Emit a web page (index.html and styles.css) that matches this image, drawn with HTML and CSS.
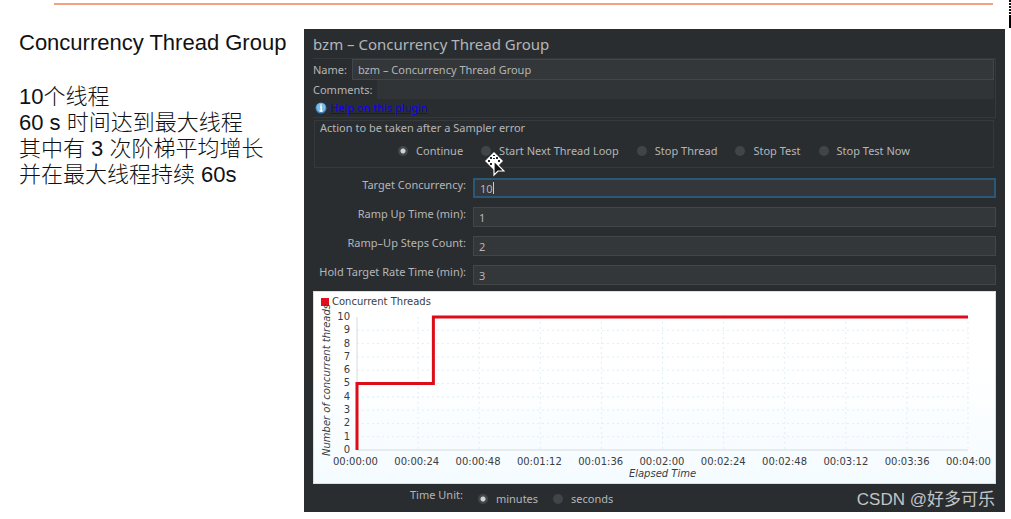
FILE: index.html
```html
<!DOCTYPE html>
<html lang="zh-CN">
<head>
<meta charset="utf-8">
<title>Concurrency Thread Group</title>
<link rel="stylesheet" href="styles.css">
</head>
<body>
<hr class="rule">
<svg class="edge-mark" viewBox="0 0 2 28" aria-hidden="true"><path d="M1 0v14" stroke="#111" stroke-width="2" stroke-dasharray="2 1"/><path d="M1 15v13" stroke="#000" stroke-width="2"/></svg>
<main class="slide">
  <section class="notes">
    <h1>Concurrency Thread Group</h1>
    <p>10个线程<br>60 s 时间达到最大线程<br>其中有 3 次阶梯平均增长<br>并在最大线程持续 60s</p>
  </section>
  <section class="panel">
    <h2>bzm – Concurrency Thread Group</h2>
    <div class="identity">
      <div class="name-row"><label for="name">Name:</label><input class="field" id="name" value="bzm – Concurrency Thread Group"></div>
      <div class="comment-row"><label for="comments">Comments:</label><input id="comments"></div>
      <div class="help">
        <svg viewBox="0 0 12 12" aria-hidden="true"><circle cx="6" cy="6" r="5.5" fill="#3d86bd"/><circle cx="6" cy="5.5" r="4.5" fill="#7dbce8"/><path d="M6 2.3v1.5M5 5h1.2v4M4.6 9h3" stroke="#fff" stroke-width="1.4" fill="none"/></svg>
        <a href="#help">Help on this plugin</a>
      </div>
    </div>
    <fieldset class="action">
      <legend>Action to be taken after a Sampler error</legend>
      <div class="options">
        <label><input type="radio" name="action" checked>Continue</label>
        <label><input type="radio" name="action">Start Next Thread Loop</label>
        <label><input type="radio" name="action">Stop Thread</label>
        <label><input type="radio" name="action">Stop Test</label>
        <label><input type="radio" name="action">Stop Test Now</label>
      </div>
      <svg class="pointer" viewBox="0 0 20 26" aria-hidden="true"><path d="M9 0 18 9 9 18 0 9Z" fill="#fff"/><path d="M9 3v1M6 5v2M12 5v2M3 9h2M13 9h2M6 11v2M9 6v1" stroke="#222" stroke-width="2"/><path d="M9 9v14l4-4h6Z" fill="#111" stroke="#fff" stroke-width="1.2"/></svg>
    </fieldset>
    <div class="settings">
      <label for="target">Target Concurrency:</label><div class="focus-wrap"><input class="field focused" id="target" value="10"><span class="caret"></span></div>
      <label for="ramp">Ramp Up Time (min):</label><input class="field" id="ramp" value="1">
      <label for="steps">Ramp–Up Steps Count:</label><input class="field" id="steps" value="2">
      <label for="hold">Hold Target Rate Time (min):</label><input class="field" id="hold" value="3">
    </div>
    <figure class="chart">
      <figcaption><i></i>Concurrent Threads</figcaption>
      <div class="y-title">Number of concurrent threads</div>
      <div class="y-axis"><span>10</span><span>9</span><span>8</span><span>7</span><span>6</span><span>5</span><span>4</span><span>3</span><span>2</span><span>1</span><span>0</span></div>
      <svg class="plot" viewBox="0 0 240 10" preserveAspectRatio="none" role="img" aria-label="Concurrent threads over time">
        <path class="grid" d="M0 1H240M0 2H240M0 3H240M0 4H240M0 5H240M0 6H240M0 7H240M0 8H240M0 9H240M24 0V10M48 0V10M72 0V10M96 0V10M120 0V10M144 0V10M168 0V10M192 0V10M216 0V10M240 0V10"/>
        <path class="axis" d="M0 0V10H240"/>
        <path class="series" d="M0 10V5H30V0H240"/>
      </svg>
      <div class="x-axis"><span>00:00:00</span><span>00:00:24</span><span>00:00:48</span><span>00:01:12</span><span>00:01:36</span><span>00:02:00</span><span>00:02:24</span><span>00:02:48</span><span>00:03:12</span><span>00:03:36</span><span>00:04:00</span></div>
      <div class="x-title">Elapsed Time</div>
    </figure>
    <div class="unit">
      <span class="unit-title">Time Unit:</span>
      <label><input type="radio" name="unit" checked>minutes</label>
      <label><input type="radio" name="unit">seconds</label>
    </div>
    <div class="watermark">CSDN @好多可乐</div>
  </section>
</main>
</body>
</html>
```
FILE: styles.css
```css
* { box-sizing: border-box; }
body { margin: 0; background: #fff; color: #111; font-family: "Liberation Sans", "Noto Sans CJK SC", sans-serif; }
.rule { height: 2px; margin: 3px 18px 0 54px; border: 0; background: #f3a183; }
.edge-mark { position: absolute; top: 0; right: 0; width: 2px; height: 28px; }
.slide { display: grid; grid-template-columns: 285px minmax(0, 1fr); padding: 24px 6px 6px 19px; }
.notes h1 { margin: 0; font-size: 22px; line-height: 28px; font-weight: 400; white-space: nowrap; }
.notes p { margin: 27px 0 0; font-size: 22px; line-height: 26px; font-weight: 300; white-space: nowrap; }

.panel { position: relative; padding: 5px 9px 4px 9px; background: #2a2d30; color: #b4b6b8; font: 11px/14px "Noto Sans", "Noto Sans CJK SC", sans-serif; }
.panel h2 { margin: 0; font-size: 15px; line-height: 20px; font-weight: 400; }
input { font: inherit; color: inherit; }
.field { width: 100%; min-width: 0; height: 20px; padding: 0 5px; background: #33373a; border: 1px solid #424648; outline: 0; }
.identity { margin: 4px 0 0; border: 1px solid #35393b; border-left: 0; padding-right: 1px; }
.name-row, .comment-row { display: flex; align-items: center; gap: 5px; }
.name-row .field { height: 21px; flex: 1; }
.comment-row input { flex: 1; min-width: 0; height: 19px; border: 0; background: #313437; outline: 0; }
.help { display: flex; align-items: center; gap: 3px; padding: 2px 0 2px 2px; }
.help svg { width: 12px; height: 12px; }
.help a { color: #1000e8; }
.action { position: relative; margin: 2px 2px 0 1px; padding: 0 5px; border: 1px solid #35393b; min-width: 0; }
.action legend { float: left; width: 100%; padding: 0; }
.options { clear: both; display: flex; justify-content: center; gap: 18px; padding: 9px 0; }
.options label, .unit label { display: flex; align-items: center; gap: 8px; }
input[type=radio] { appearance: none; width: 10px; height: 10px; margin: 0; border-radius: 50%; background: #424547; }
input[type=radio]:checked { background: radial-gradient(circle, #d0d2d3 0 2px, #44474a 3px); }
.pointer { position: absolute; left: 170px; top: 31px; width: 20px; height: 26px; }
.settings { display: grid; grid-template-columns: 153px minmax(0, 1fr); column-gap: 7px; row-gap: 9px; margin: 10px 0 0; text-align: right; }
.settings label { white-space: nowrap; }
.focus-wrap { position: relative; }
.focused { display: block; border: 2px solid #2a5879; }
.caret { position: absolute; left: 20px; top: 4px; width: 1px; height: 12px; background: #ccc; }

.chart { display: grid; grid-template-columns: 14px 22px minmax(0, 1fr); grid-template-rows: 19px 145px 12px 12px; margin: 6px 0 0; padding: 0 27px 2px 7px; height: 193px; background: linear-gradient(#fff 40%, #f4fbff); color: #3a3d42; border: 1px solid #ddd; font: 10px/12px "DejaVu Sans", sans-serif; }
.chart figcaption { grid-column: 1 / 4; display: flex; align-items: center; gap: 3px; }
.chart figcaption i { width: 8px; height: 8px; background: #e0101c; }
.y-title { grid-row: 2; writing-mode: vertical-rl; transform: rotate(180deg); font-style: italic; white-space: nowrap; }
.y-axis { grid-row: 2; display: flex; flex-direction: column; justify-content: space-between; text-align: right; padding-right: 7px; }
.plot { grid-row: 2; width: 100%; height: 133px; margin: 6px 0; overflow: visible; }
.plot path { fill: none; vector-effect: non-scaling-stroke; }
.grid { stroke: #e0eff6; stroke-dasharray: 2 3; }
.axis { stroke: #d5dce1; }
.series { stroke: #dc0c18; stroke-width: 3; }
.x-axis { grid-column: 1 / 4; display: flex; justify-content: space-between; margin: 0 -23px 0 12px; }
.x-title { grid-column: 3; text-align: center; font-style: italic; }
.unit { display: flex; align-items: center; gap: 15px; padding: 4px 0 2px 97px; }
.unit-title { padding-bottom: 4px; }
.unit label { padding-top: 4px; }
.watermark { position: absolute; right: 10px; bottom: 1px; font: 17px/22px "Liberation Sans", "Noto Sans CJK SC", sans-serif; color: #c2c4c6; }
```
